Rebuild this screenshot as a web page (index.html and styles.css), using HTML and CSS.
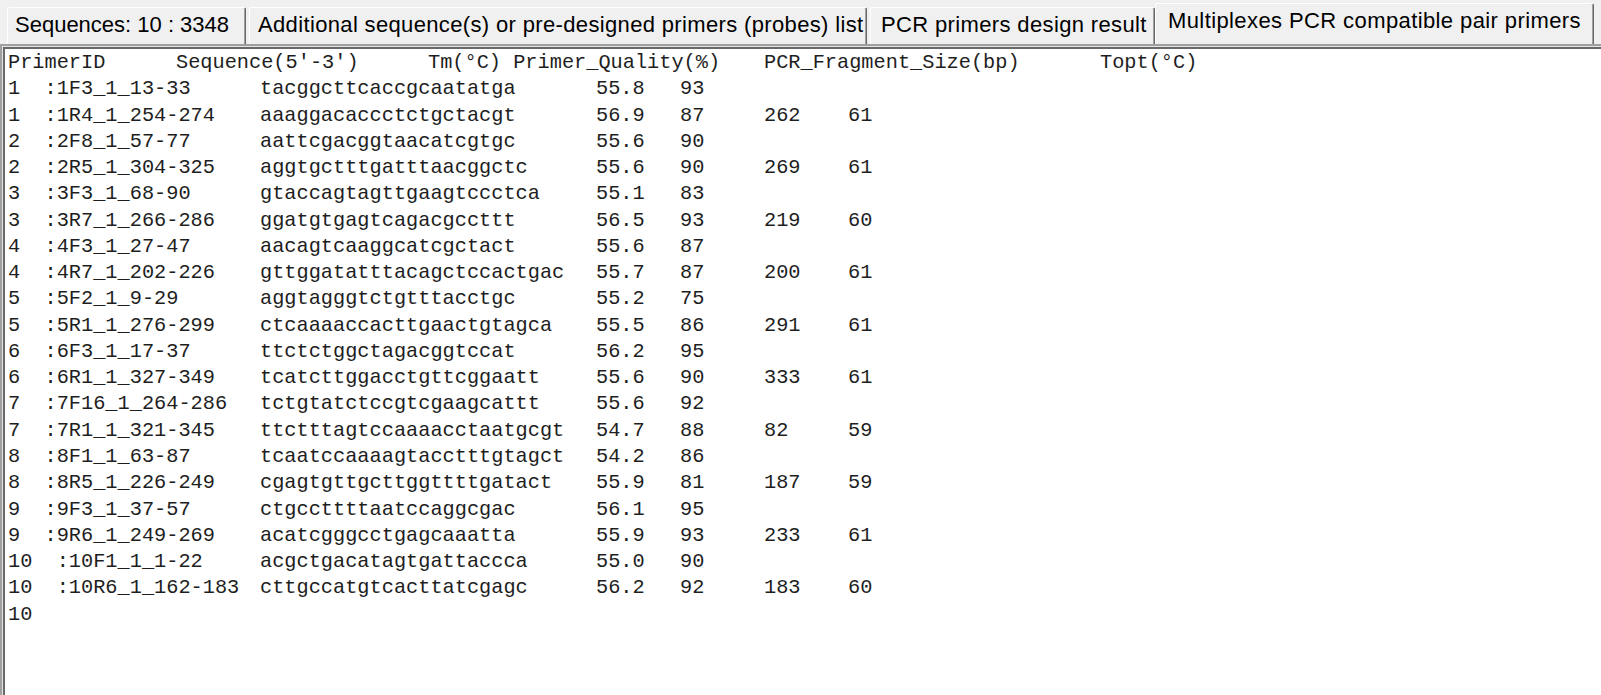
FILE: index.html
```html
<!DOCTYPE html>
<html>
<head>
<meta charset="utf-8">
<title>Multiplexes PCR compatible pair primers</title>
<link rel="stylesheet" href="styles.css">
</head>
<body>
<div class="window">
  <div class="tabs">
    <div class="tab tab-seq">Sequences: 10 : 3348</div>
    <div class="tab tab-add">Additional sequence(s) or pre-designed primers (probes) list</div>
    <div class="tab tab-pcr">PCR primers design result</div>
    <div class="tab tab-multi active">Multiplexes PCR compatible pair primers</div>
  </div>
  <div class="panel">
<pre class="listing">PrimerID&#9;Sequence(5'-3')&#9;Tm(°C) Primer_Quality(%)&#9;PCR_Fragment_Size(bp)&#9;Topt(°C)
1  :1F3_1_13-33&#9;tacggcttcaccgcaatatga&#9;55.8&#9;93
1  :1R4_1_254-274&#9;aaaggacaccctctgctacgt&#9;56.9&#9;87&#9;262&#9;61
2  :2F8_1_57-77&#9;aattcgacggtaacatcgtgc&#9;55.6&#9;90
2  :2R5_1_304-325&#9;aggtgctttgatttaacggctc&#9;55.6&#9;90&#9;269&#9;61
3  :3F3_1_68-90&#9;gtaccagtagttgaagtccctca&#9;55.1&#9;83
3  :3R7_1_266-286&#9;ggatgtgagtcagacgccttt&#9;56.5&#9;93&#9;219&#9;60
4  :4F3_1_27-47&#9;aacagtcaaggcatcgctact&#9;55.6&#9;87
4  :4R7_1_202-226&#9;gttggatatttacagctccactgac&#9;55.7&#9;87&#9;200&#9;61
5  :5F2_1_9-29&#9;aggtagggtctgtttacctgc&#9;55.2&#9;75
5  :5R1_1_276-299&#9;ctcaaaaccacttgaactgtagca&#9;55.5&#9;86&#9;291&#9;61
6  :6F3_1_17-37&#9;ttctctggctagacggtccat&#9;56.2&#9;95
6  :6R1_1_327-349&#9;tcatcttggacctgttcggaatt&#9;55.6&#9;90&#9;333&#9;61
7  :7F16_1_264-286&#9;tctgtatctccgtcgaagcattt&#9;55.6&#9;92
7  :7R1_1_321-345&#9;ttctttagtccaaaacctaatgcgt&#9;54.7&#9;88&#9;82&#9;59
8  :8F1_1_63-87&#9;tcaatccaaaagtacctttgtagct&#9;54.2&#9;86
8  :8R5_1_226-249&#9;cgagtgttgcttggttttgatact&#9;55.9&#9;81&#9;187&#9;59
9  :9F3_1_37-57&#9;ctgccttttaatccaggcgac&#9;56.1&#9;95
9  :9R6_1_249-269&#9;acatcgggcctgagcaaatta&#9;55.9&#9;93&#9;233&#9;61
10  :10F1_1_1-22&#9;acgctgacatagtgattaccca&#9;55.0&#9;90
10  :10R6_1_162-183&#9;cttgccatgtcacttatcgagc&#9;56.2&#9;92&#9;183&#9;60
10</pre>
  </div>
</div>
</body>
</html>
```

FILE: styles.css
```css
html, body {
  margin: 0;
  padding: 0;
  background: #f0f0f0;
}

.window {
  width: 1601px;
  height: 695px;
  overflow: hidden;
  display: flex;
  flex-direction: column;
  background: #f0f0f0;
}

.tabs {
  height: 44px;
  flex: none;
  display: flex;
  align-items: flex-end;
  padding-left: 7px;
  box-sizing: border-box;
}

.tab {
  flex: none;
  box-sizing: border-box;
  height: 37px;
  padding-top: 4px;
  font-family: "Liberation Sans", Arial, sans-serif;
  font-size: 22px;
  line-height: 25px;
  color: #000;
  white-space: nowrap;
  overflow: hidden;
  background: #f0f0f0;
  border-top: 1px solid #ffffff;
  border-left: 1px solid #ffffff;
  border-right: 1px solid #696969;
  box-shadow: inset -1px 0 0 #a0a0a0;
  border-radius: 2px 2px 0 0;
}

.tab-seq {
  width: 239px;
  padding-left: 7px;
  margin-right: 3px;
}

.tab-add {
  width: 618px;
  padding-left: 8px;
  margin-right: 3px;
  letter-spacing: 0.35px;
}

.tab-pcr {
  width: 285px;
  padding-left: 10px;
  letter-spacing: 0.36px;
}

.tab-multi {
  width: 439px;
  padding-left: 12px;
  letter-spacing: 0.4px;
}

.tab.active {
  height: 41px;
  padding-top: 4px;
}

.panel {
  flex: 1;
  background: #ffffff;
  border-top: 2px solid #a0a0a0;
  border-left: 2px solid #a0a0a0;
  box-shadow: inset 1px 1px 0 #e3e3e3, inset 3px 3px 0 #696969;
  overflow: hidden;
}

.listing {
  margin: 0;
  padding: 4px 0 0 6px;
  font-family: "Liberation Mono", "Courier New", monospace;
  font-size: 20.3px;
  line-height: 26.27px;
  color: #1e1e1e;
  tab-size: 84px;
  -moz-tab-size: 84px;
  white-space: pre;
}
```
